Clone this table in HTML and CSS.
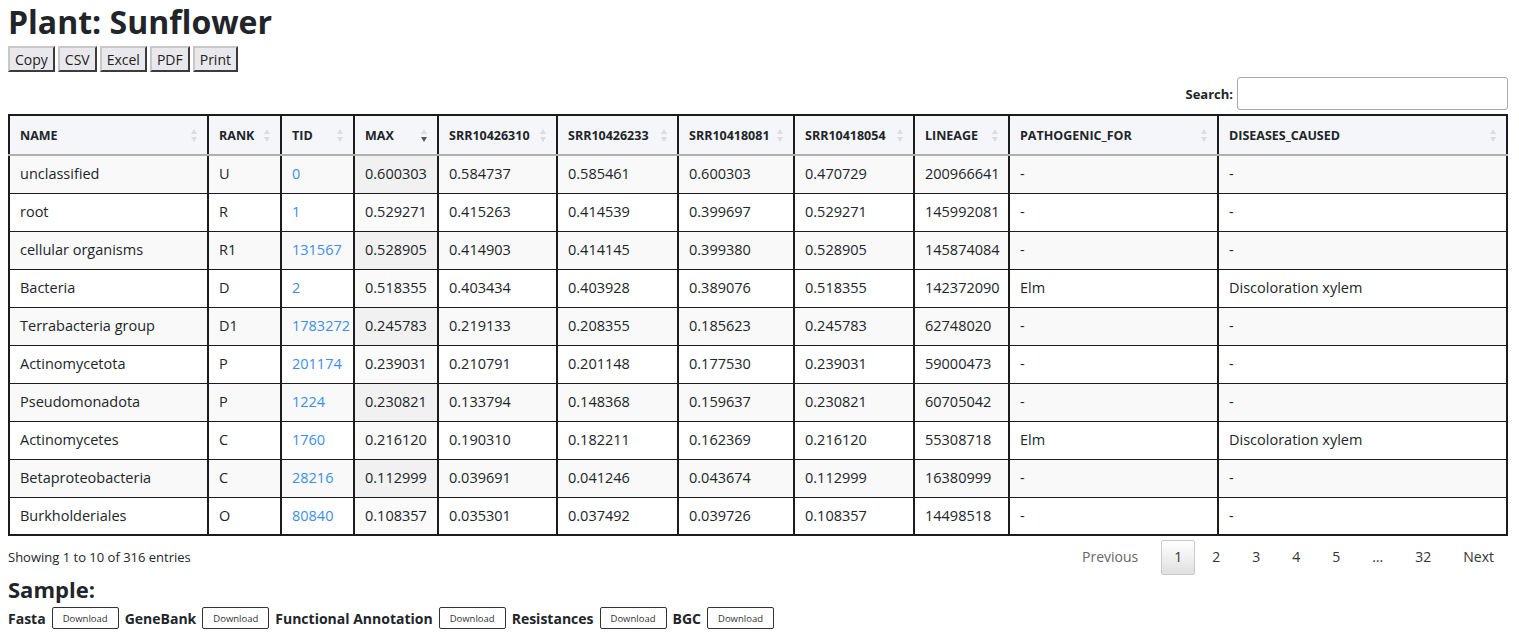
FILE: index.html
```html
<!DOCTYPE html>
<html>
<head>
<meta charset="utf-8">
<link rel="stylesheet" href="styles.css">
</head>
<body>
<h1 class="title">Plant: Sunflower</h1>
<div class="buttons">
  <button class="dt-btn">Copy</button>
  <button class="dt-btn">CSV</button>
  <button class="dt-btn">Excel</button>
  <button class="dt-btn">PDF</button>
  <button class="dt-btn">Print</button>
</div>
<div class="search-row">
  <label class="search-label">Search:</label>
  <input class="search-input" type="text">
</div>
<table class="data">
  <colgroup>
    <col class="c1"><col class="c2"><col class="c3"><col class="c4"><col class="c5"><col class="c6"><col class="c7"><col class="c8"><col class="c9"><col class="c10"><col class="c11">
  </colgroup>
  <thead>
    <tr>
      <th>NAME<span class="sort"></span></th>
      <th>RANK<span class="sort"></span></th>
      <th>TID<span class="sort"></span></th>
      <th>MAX<span class="sort desc"></span></th>
      <th>SRR10426310<span class="sort"></span></th>
      <th>SRR10426233<span class="sort"></span></th>
      <th>SRR10418081<span class="sort"></span></th>
      <th>SRR10418054<span class="sort"></span></th>
      <th>LINEAGE<span class="sort"></span></th>
      <th>PATHOGENIC_FOR<span class="sort"></span></th>
      <th>DISEASES_CAUSED<span class="sort"></span></th>
    </tr>
  </thead>
  <tbody>
    <tr class="odd"><td>unclassified</td><td>U</td><td><a>0</a></td><td class="sorted">0.600303</td><td>0.584737</td><td>0.585461</td><td>0.600303</td><td>0.470729</td><td>200966641</td><td>-</td><td>-</td></tr>
    <tr><td>root</td><td>R</td><td><a>1</a></td><td class="sorted">0.529271</td><td>0.415263</td><td>0.414539</td><td>0.399697</td><td>0.529271</td><td>145992081</td><td>-</td><td>-</td></tr>
    <tr class="odd"><td>cellular organisms</td><td>R1</td><td><a>131567</a></td><td class="sorted">0.528905</td><td>0.414903</td><td>0.414145</td><td>0.399380</td><td>0.528905</td><td>145874084</td><td>-</td><td>-</td></tr>
    <tr><td>Bacteria</td><td>D</td><td><a>2</a></td><td class="sorted">0.518355</td><td>0.403434</td><td>0.403928</td><td>0.389076</td><td>0.518355</td><td>142372090</td><td>Elm</td><td>Discoloration xylem</td></tr>
    <tr class="odd"><td>Terrabacteria group</td><td>D1</td><td><a>1783272</a></td><td class="sorted">0.245783</td><td>0.219133</td><td>0.208355</td><td>0.185623</td><td>0.245783</td><td>62748020</td><td>-</td><td>-</td></tr>
    <tr><td>Actinomycetota</td><td>P</td><td><a>201174</a></td><td class="sorted">0.239031</td><td>0.210791</td><td>0.201148</td><td>0.177530</td><td>0.239031</td><td>59000473</td><td>-</td><td>-</td></tr>
    <tr class="odd"><td>Pseudomonadota</td><td>P</td><td><a>1224</a></td><td class="sorted">0.230821</td><td>0.133794</td><td>0.148368</td><td>0.159637</td><td>0.230821</td><td>60705042</td><td>-</td><td>-</td></tr>
    <tr><td>Actinomycetes</td><td>C</td><td><a>1760</a></td><td class="sorted">0.216120</td><td>0.190310</td><td>0.182211</td><td>0.162369</td><td>0.216120</td><td>55308718</td><td>Elm</td><td>Discoloration xylem</td></tr>
    <tr class="odd"><td>Betaproteobacteria</td><td>C</td><td><a>28216</a></td><td class="sorted">0.112999</td><td>0.039691</td><td>0.041246</td><td>0.043674</td><td>0.112999</td><td>16380999</td><td>-</td><td>-</td></tr>
    <tr><td>Burkholderiales</td><td>O</td><td><a>80840</a></td><td class="sorted">0.108357</td><td>0.035301</td><td>0.037492</td><td>0.039726</td><td>0.108357</td><td>14498518</td><td>-</td><td>-</td></tr>
  </tbody>
</table>
<div class="footer-row">
  <div class="info">Showing 1 to 10 of 316 entries</div>
  <div class="pager">
    <span class="pg disabled">Previous</span>
    <span class="pg current">1</span>
    <span class="pg">2</span>
    <span class="pg">3</span>
    <span class="pg">4</span>
    <span class="pg">5</span>
    <span class="pg ellipsis">…</span>
    <span class="pg">32</span>
    <span class="pg">Next</span>
  </div>
</div>
<h2 class="sample">Sample:</h2>
<div class="downloads">
  <b class="dl-label">Fasta</b><button class="dl-btn">Download</button>
  <b class="dl-label">GeneBank</b><button class="dl-btn">Download</button>
  <b class="dl-label">Functional Annotation</b><button class="dl-btn">Download</button>
  <b class="dl-label">Resistances</b><button class="dl-btn">Download</button>
  <b class="dl-label">BGC</b><button class="dl-btn">Download</button>
</div>
</body>
</html>
```
FILE: styles.css
```css
body {
  margin: 0 8px;
  font-family: "Open Sans", "DejaVu Sans", sans-serif;
  color: #212529;
  font-size: 14px;
}
.title {
  margin: 3px 0 0 0;
  font-size: 32px;
  line-height: 38px;
  font-weight: 700;
}
.buttons {
  display: flex;
  gap: 3px;
  margin-top: 5px;
}
.dt-btn {
  font-family: inherit;
  font-size: 14px;
  color: #222;
  background: #e9e9ed;
  border: 2px outset #c8c8c8;
  border-right-color: #8f8f8f;
  border-bottom-color: #8f8f8f;
  padding: 1px 5px;
  height: 26px;
  margin: 0;
}
.search-row {
  display: flex;
  justify-content: flex-end;
  align-items: center;
  gap: 4px;
  margin-top: 5px;
  margin-right: 3px;
  height: 33px;
}
.search-label {
  font-weight: 700;
  font-size: 13px;
}
.search-input {
  width: 271px;
  box-sizing: border-box;
  height: 33px;
  border: 1px solid #aaa;
  border-radius: 3px;
  margin: 0;
  padding: 0 5px;
}
.data {
  margin-top: 4px;
  width: 1498px;
  table-layout: fixed;
  border-collapse: collapse;
  border: 2px solid #1c1c1c;
}
.c1 { width: 199px; }
.c2 { width: 73px; }
.c3 { width: 73px; }
.c4 { width: 84px; }
.c5 { width: 119px; }
.c6 { width: 121px; }
.c7 { width: 116px; }
.c8 { width: 120px; }
.c9 { width: 95px; }
.c10 { width: 209px; }
.c11 { width: 289px; }
.data thead tr { height: 40px; }
.data th {
  position: relative;
  text-align: left;
  font-size: 12.5px;
  font-weight: 700;
  background: #f5f6fa;
  padding: 0 18px 0 10px;
  border: 2px solid #1c1c1c;
  border-bottom: 2px solid #b0b0b0;
  white-space: nowrap;
}
.sort {
  position: absolute;
  right: 9px;
  top: 12px;
  width: 8px;
  height: 16px;
}
.sort::before, .sort::after {
  content: "";
  position: absolute;
  left: 1px;
  border-left: 3.5px solid transparent;
  border-right: 3.5px solid transparent;
}
.sort::before {
  top: 1px;
  border-bottom: 5px solid #dcdcdc;
}
.sort::after {
  top: 9px;
  border-top: 5px solid #dcdcdc;
}
.sort.desc::after {
  border-top-color: #555;
}
.data tbody tr { height: 38px; }
.data td {
  padding: 0 10px;
  line-height: 20px;
  border: 2px solid #1c1c1c;
  border-top-width: 1px;
  border-bottom-width: 1px;
  white-space: nowrap;
  overflow: hidden;
  font-size: 14.5px;
}
.data tbody tr:last-child td {
  border-bottom-width: 2px;
}
.data tr.odd td { background: #f9f9f9; }
.data tr.odd td.sorted { background: #f1f1f1; }
.data td.sorted { background: #fafafa; }
.data a { color: #3d8fe6; }
.footer-row {
  display: flex;
  justify-content: space-between;
  align-items: flex-start;
  margin-top: 4px;
}
.info {
  font-size: 13px;
  line-height: 18px;
  padding-top: 8px;
}
.pager {
  display: flex;
  align-items: center;
  margin-right: 2px;
}
.pg {
  display: inline-block;
  padding: 6px 14px 7px;
  margin-left: 2px;
  line-height: 20px;
  font-size: 14px;
  border: 1px solid transparent;
  border-radius: 2px;
  color: #333;
}
.pg.disabled { color: #666; margin-right: 6px; }
.pg.current {
  padding: 6px 12px 7px;
  border-color: #cacaca;
  background: linear-gradient(#fff, #e0e0e0);
}
.sample {
  margin: 2px 0 0 0;
  font-size: 22px;
  line-height: 24px;
  font-weight: 700;
}
.downloads {
  display: flex;
  align-items: center;
  margin-top: 6px;
  gap: 6px;
}
.dl-label { font-size: 14px; font-weight: 700; }
.dl-btn {
  font-family: inherit;
  font-size: 9.5px;
  color: #333;
  background: #fff;
  border: 1px solid #333;
  border-radius: 2px;
  height: 22px;
  padding: 0 10px;
  margin: 0;
}
```
